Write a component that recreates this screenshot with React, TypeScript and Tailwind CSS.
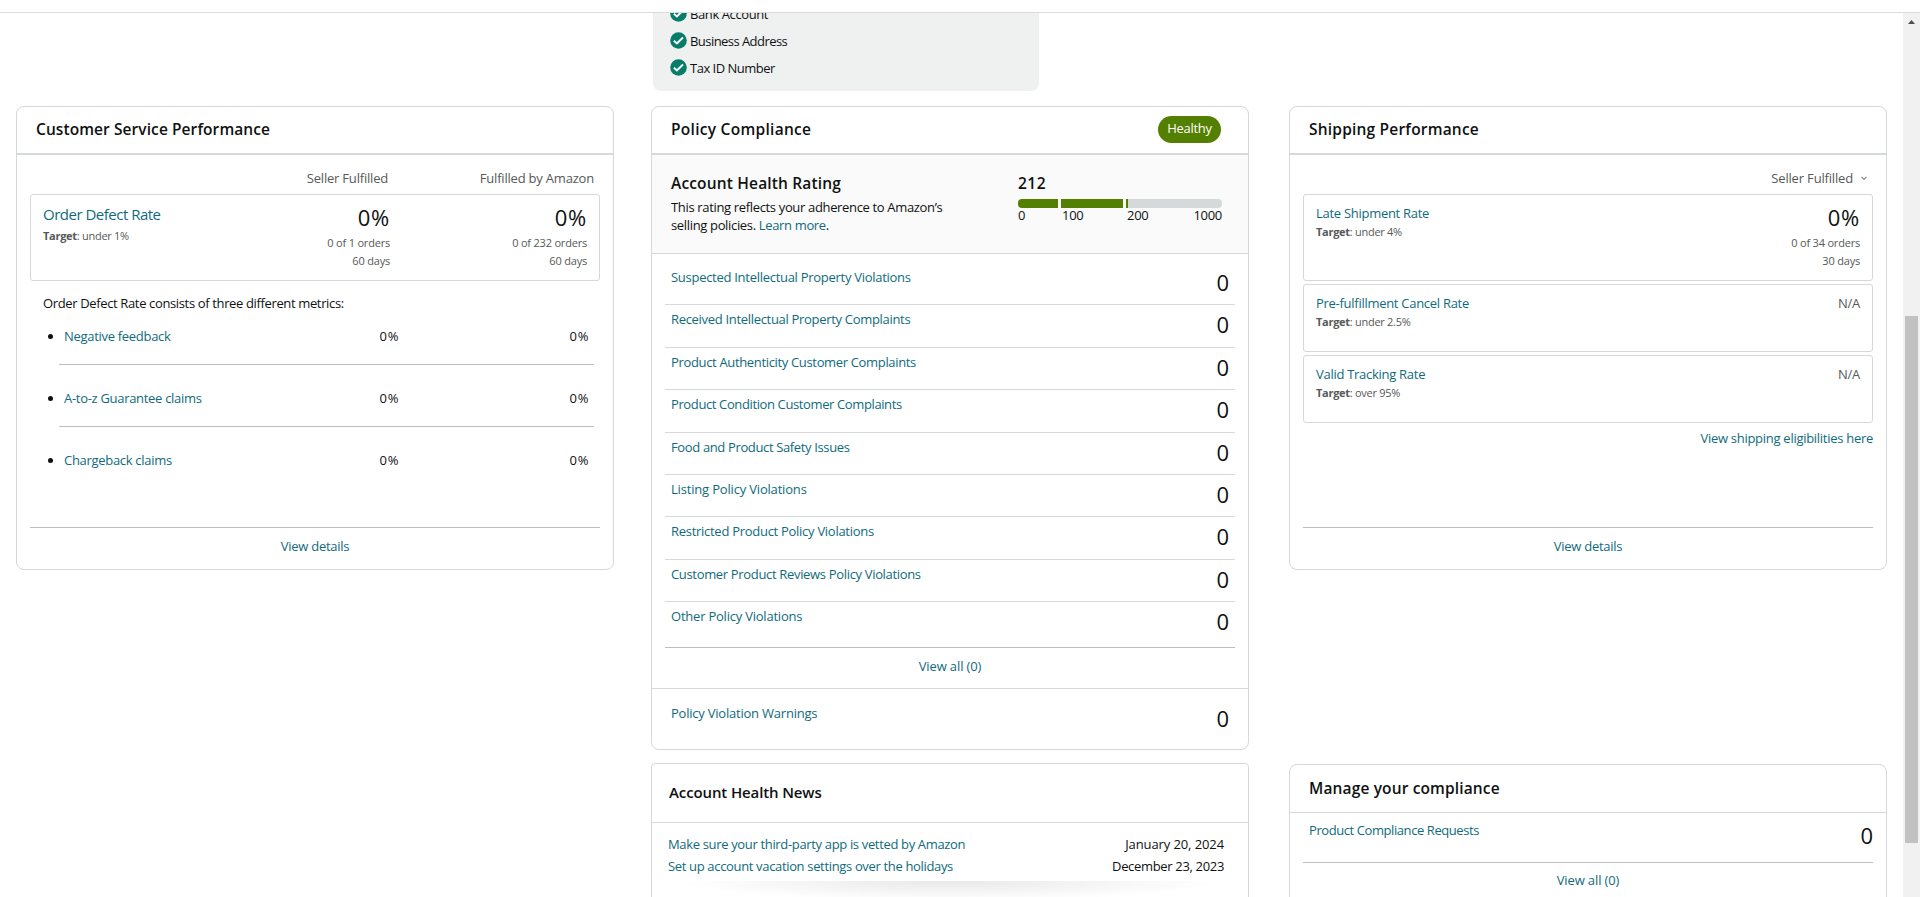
import { ReactNode } from 'react'
import clsx from 'clsx'

const policyRows = [
  { label: 'Suspected Intellectual Property Violations' },
  { label: 'Received Intellectual Property Complaints', tracking: 'tracking-[-0.31px]' },
  { label: 'Product Authenticity Customer Complaints', tracking: 'tracking-[-0.34px]' },
  { label: 'Product Condition Customer Complaints', tracking: 'tracking-[-0.38px]' },
  { label: 'Food and Product Safety Issues', tracking: 'tracking-[-0.36px]' },
  { label: 'Listing Policy Violations', tracking: 'tracking-[-0.18px]' },
  { label: 'Restricted Product Policy Violations' },
  { label: 'Customer Product Reviews Policy Violations', tracking: 'tracking-[-0.33px]' },
  { label: 'Other Policy Violations', tracking: 'tracking-[-0.22px]' },
]

const news = [
  { title: 'Make sure your third-party app is vetted by Amazon', date: 'January 20, 2024', dateTracking: 'tracking-[-0.1px]' },
  { title: 'Set up account vacation settings over the holidays', date: 'December 23, 2023', dateTracking: 'tracking-[-0.33px]' },
]

function Link({ children, className }: { children: ReactNode, className?: string }) {
  return <a href="#" className={clsx('text-[#0f6b7c]', className)}>{children}</a>
}

function CardHeader({ title, titleClass, thin, children }: { title: string, titleClass: string, thin?: boolean, children?: ReactNode }) {
  return (
    <div className={clsx('flex h-12 shrink-0 items-center justify-between border-[#d5d9d9] pr-[27px] pb-[2px] pl-[19px]', thin ? 'border-b' : 'border-b-2')}>
      <h2 className={clsx('text-[15.5px] leading-5 font-semibold', titleClass)}>{title}</h2>
      {children}
    </div>
  )
}

function CardFooter({ label }: { label: string }) {
  return (
    <div className="mx-[13px] mt-auto h-[42px] border-t border-[#bbbfbf] pt-2 text-center">
      <Link>{label}</Link>
    </div>
  )
}

function Target({ value }: { value: string }) {
  return (
    <p className="text-[11px] leading-4 tracking-[-0.28px] text-[#565959]">
      <span className="font-bold">Target</span>: {value}
    </p>
  )
}

function Stat({ orders, days, className }: { orders: string, days: string, className?: string }) {
  return (
    <div className={clsx('text-right', className)}>
      <p className="mb-1 text-[22px] leading-[26px] tracking-[0.8px]">0%</p>
      <p className="text-[11px] leading-[18px] tracking-[-0.2px] text-[#565959]">{orders}</p>
      <p className="text-[11px] leading-[18px] tracking-[-0.2px] text-[#565959]">{days}</p>
    </div>
  )
}

function CountRow({ label, tracking, className }: { label: string, tracking?: string, className?: string }) {
  return (
    <div className={clsx('flex justify-between pt-1', className)}>
      <Link className={tracking}>{label}</Link>
      <span className="text-[22px] leading-[30px] tracking-normal">0</span>
    </div>
  )
}

function Verified({ label, className }: { label: string, className?: string }) {
  return (
    <li className={clsx('flex h-[27px] shrink-0 items-center gap-[3px]', className)}>
      <svg width="17" height="17" viewBox="0 0 17 17" fill="none">
        <circle cx="8.5" cy="8.5" r="8.3" fill="#067d68" />
        <path d="M3.9 8.8 6.9 11.4 13 5.5" stroke="#fff" strokeWidth="2" />
      </svg>
      {label}
    </li>
  )
}

function CustomerService() {
  return (
    <section className="flex h-[464px] flex-col rounded-lg border border-[#d5d9d9]">
      <CardHeader title="Customer Service Performance" titleClass="tracking-[0.08px]" />
      <div className="px-[13px] pt-[13px]">
        <div className="flex justify-end pr-[6px] tracking-[-0.2px] text-[#565959]">
          <span>Seller Fulfilled</span>
          <span className="w-[206px] text-right">Fulfilled by Amazon</span>
        </div>
        <div className="mt-[6px] flex h-[87px] rounded-[3px] border border-[#d5d9d9] px-3 pt-[9px]">
          <div className="flex-1">
            <Link className="mb-1 block text-[15px] tracking-[-0.5px]">Order Defect Rate</Link>
            <Target value="under 1%" />
          </div>
          <Stat orders="0 of 1 orders" days="60 days" />
          <Stat orders="0 of 232 orders" days="60 days" className="w-[197px]" />
        </div>
        <p className="mt-3 pl-[13px] tracking-[-0.36px]">Order Defect Rate consists of three different metrics:</p>
        <ul className="mr-[6px] ml-[18px]">
          {['Negative feedback', 'A-to-z Guarantee claims', 'Chargeback claims'].map((name, i) => (
            <li key={name} className="flex">
              <span className={clsx('mr-[6px] size-[5px] rounded-full bg-[#0f1111]', i === 0 ? 'mt-[21px]' : 'mt-[31px]')} />
              <div className={clsx('flex flex-1 pr-[5px] pb-[18px] pl-[5px]', i === 0 ? 'pt-[13px]' : 'pt-[23px]', i < 2 && 'border-b border-[#bbbfbf]')}>
                <Link className="flex-1 tracking-[-0.3px]">{name}</Link>
                <span className="tracking-[0.6px]">0%</span>
                <span className="w-[190px] text-right tracking-[0.6px]">0%</span>
              </div>
            </li>
          ))}
        </ul>
      </div>
      <CardFooter label="View details" />
    </section>
  )
}

function HealthBar() {
  return (
    <div className="w-[204px]">
      <p className="text-[15.5px] leading-[21px] font-semibold tracking-[0.5px]">212</p>
      <div className="mt-[5px] flex h-[9px] overflow-hidden rounded-[4px]">
        <span className="mr-[3px] w-10 bg-[#538000]" />
        <span className="mr-[3px] w-[62px] bg-[#538000]" />
        <span className="w-[2px] bg-[#538000]" />
        <span className="flex-1 bg-[#d5d9d9]" />
      </div>
      <div className="flex leading-[14px] tracking-[-0.3px]">
        <span className="w-11">0</span>
        <span className="w-[65px]">100</span>
        <span>200</span>
        <span className="ml-auto">1000</span>
      </div>
    </div>
  )
}

function PolicyCompliance() {
  return (
    <section className="flex h-[644px] flex-col rounded-lg border border-[#d5d9d9]">
      <CardHeader title="Policy Compliance" titleClass="tracking-[0.28px]">
        <span className="mt-px h-[27px] w-[63px] rounded-full bg-[#538000] text-center leading-6 font-medium tracking-[-0.3px] text-white">Healthy</span>
      </CardHeader>
      <div className="flex h-[99px] shrink-0 justify-between border-b border-[#d5d9d9] bg-[#fafafa] pt-[18px] pr-[26px] pl-[19px]">
        <div>
          <h3 className="mb-1 text-[15.5px] leading-[21px] font-semibold tracking-[0.16px]">Account Health Rating</h3>
          <p className="w-[290px] leading-[18px] tracking-[-0.34px]">
            This rating reflects your adherence to Amazon’s<br />selling policies. <Link>Learn more</Link>.
          </p>
        </div>
        <HealthBar />
      </div>
      <div className="mt-[9px] px-[13px]">
        {policyRows.map((row, i) => (
          <CountRow
            key={row.label}
            label={row.label}
            tracking={row.tracking}
            className={clsx('border-b px-[6px]', i === policyRows.length - 1 ? 'h-[46px] border-[#bbbfbf]' : 'h-[42.4px] border-[#d5d9d9]')}
          />
        ))}
      </div>
      <div className="h-[41px] border-b border-[#d5d9d9] pt-2 text-center">
        <Link className="tracking-[-0.12px]">View all (0)</Link>
      </div>
      <CountRow label="Policy Violation Warnings" tracking="tracking-[-0.22px]" className="mt-[10px] px-[19px]" />
    </section>
  )
}

function ShippingPerformance() {
  return (
    <section className="flex h-[464px] flex-col rounded-lg border border-[#d5d9d9]">
      <CardHeader title="Shipping Performance" titleClass="tracking-[0.2px]" />
      <div className="px-[13px] pt-[13px]">
        <div className="flex items-center justify-end gap-2 pr-[6px] tracking-[-0.17px] text-[#565959]">
          Seller Fulfilled
          <svg width="6" height="5" viewBox="0 0 7 5" fill="none" stroke="#7a7d7d" strokeWidth="1.2">
            <path d="M.6.7 3.5 3.8 6.4.7" />
          </svg>
        </div>
        <div className="mt-[6px] flex h-[87px] justify-between rounded-[3px] border border-[#d5d9d9] px-3 pt-2">
          <div>
            <Link className="mb-px block">Late Shipment Rate</Link>
            <Target value="under 4%" />
          </div>
          <Stat orders="0 of 34 orders" days="30 days" className="pt-[1px]" />
        </div>
        {[['Pre-fulfillment Cancel Rate', 'under 2.5%'], ['Valid Tracking Rate', 'over 95%']].map(([name, target]) => (
          <div key={name} className="mt-[3px] flex h-17 justify-between rounded-[3px] border border-[#d5d9d9] px-3 pt-2">
            <div>
              <Link className="mb-px block">{name}</Link>
              <Target value={target} />
            </div>
            <span className="text-[#565959]">N/A</span>
          </div>
        ))}
        <p className="mt-[5px] text-right"><Link>View shipping eligibilities here</Link></p>
      </div>
      <CardFooter label="View details" />
    </section>
  )
}

function News() {
  return (
    <section className="h-[200px] rounded-[4px] border border-[#d5d9d9]">
      <div className="flex h-[59px] items-center border-b border-[#d5d9d9] pb-[2px] pl-[17px]">
        <h2 className="text-[15px] leading-5 font-semibold tracking-[-0.12px]">Account Health News</h2>
      </div>
      <div className="pt-[10px] pr-6 pl-[16px] leading-[22px]">
        {news.map((n) => (
          <div key={n.title} className="flex justify-between">
            <Link className="tracking-[-0.34px]">{n.title}</Link>
            <span className={n.dateTracking}>{n.date}</span>
          </div>
        ))}
      </div>
      <div className="mx-6 mt-1 h-5 bg-[radial-gradient(ellipse_at_top,rgba(0,0,0,0.09),transparent_70%)]" />
    </section>
  )
}

function ManageCompliance() {
  return (
    <section className="mt-[1px] h-[200px] rounded-t-lg border border-[#d5d9d9]">
      <CardHeader title="Manage your compliance" titleClass="tracking-[0.14px]" thin />
      <div className="mx-[13px]">
        <CountRow label="Product Compliance Requests" tracking="tracking-[-0.42px]" className="h-[50px] border-b border-[#bbbfbf] pt-[7px] pl-[6px]" />
        <p className="pt-[7px] text-center"><Link className="tracking-[-0.12px]">View all (0)</Link></p>
      </div>
    </section>
  )
}

export default function App() {
  return (
    <div className="flex h-[897px] w-[1920px] flex-col overflow-hidden bg-white font-['Open_Sans','Noto_Sans',sans-serif] text-[13px] leading-5 tracking-[-0.28px] text-[#0f1111]">
      <div className="h-[13px] shrink-0 border-b border-[#dcdcdc]" />
      <div className="flex min-h-0 flex-1">
        <main className="flex-1 overflow-hidden">
          <div className="ml-[653px] flex h-[78px] w-[386px] flex-col justify-end overflow-hidden rounded-b-lg bg-[#eff1f1] pb-[10px] pl-[17px]">
            <ul className="flex flex-col">
              <Verified label="Bank Account" className="tracking-[-0.4px]" />
              <Verified label="Business Address" className="tracking-[-0.55px]" />
              <Verified label="Tax ID Number" className="tracking-[-0.5px]" />
            </ul>
          </div>
          <div className="mt-[15px] grid grid-cols-[598px_598px_598px] items-start gap-y-[13px] pl-4">
            <CustomerService />
            <div className="ml-[37px] w-[598px]"><PolicyCompliance /></div>
            <div className="ml-[77px] w-[598px]"><ShippingPerformance /></div>
            <div className="col-start-2 ml-[37px] w-[598px]"><News /></div>
            <div className="ml-[77px] w-[598px]"><ManageCompliance /></div>
          </div>
        </main>
        {/* scrollbar */}
        <div className="flex w-[17px] flex-col items-center bg-[#f1f1f1]">
          <svg width="7" height="4" viewBox="0 0 7 4" className="mt-[7px] shrink-0" fill="#505050">
            <path d="M3.5 0 7 4H0Z" />
          </svg>
          <div className="mt-[292px] h-[527px] w-[13px] shrink-0 bg-[#c1c1c1]" />
        </div>
      </div>
    </div>
  )
}
